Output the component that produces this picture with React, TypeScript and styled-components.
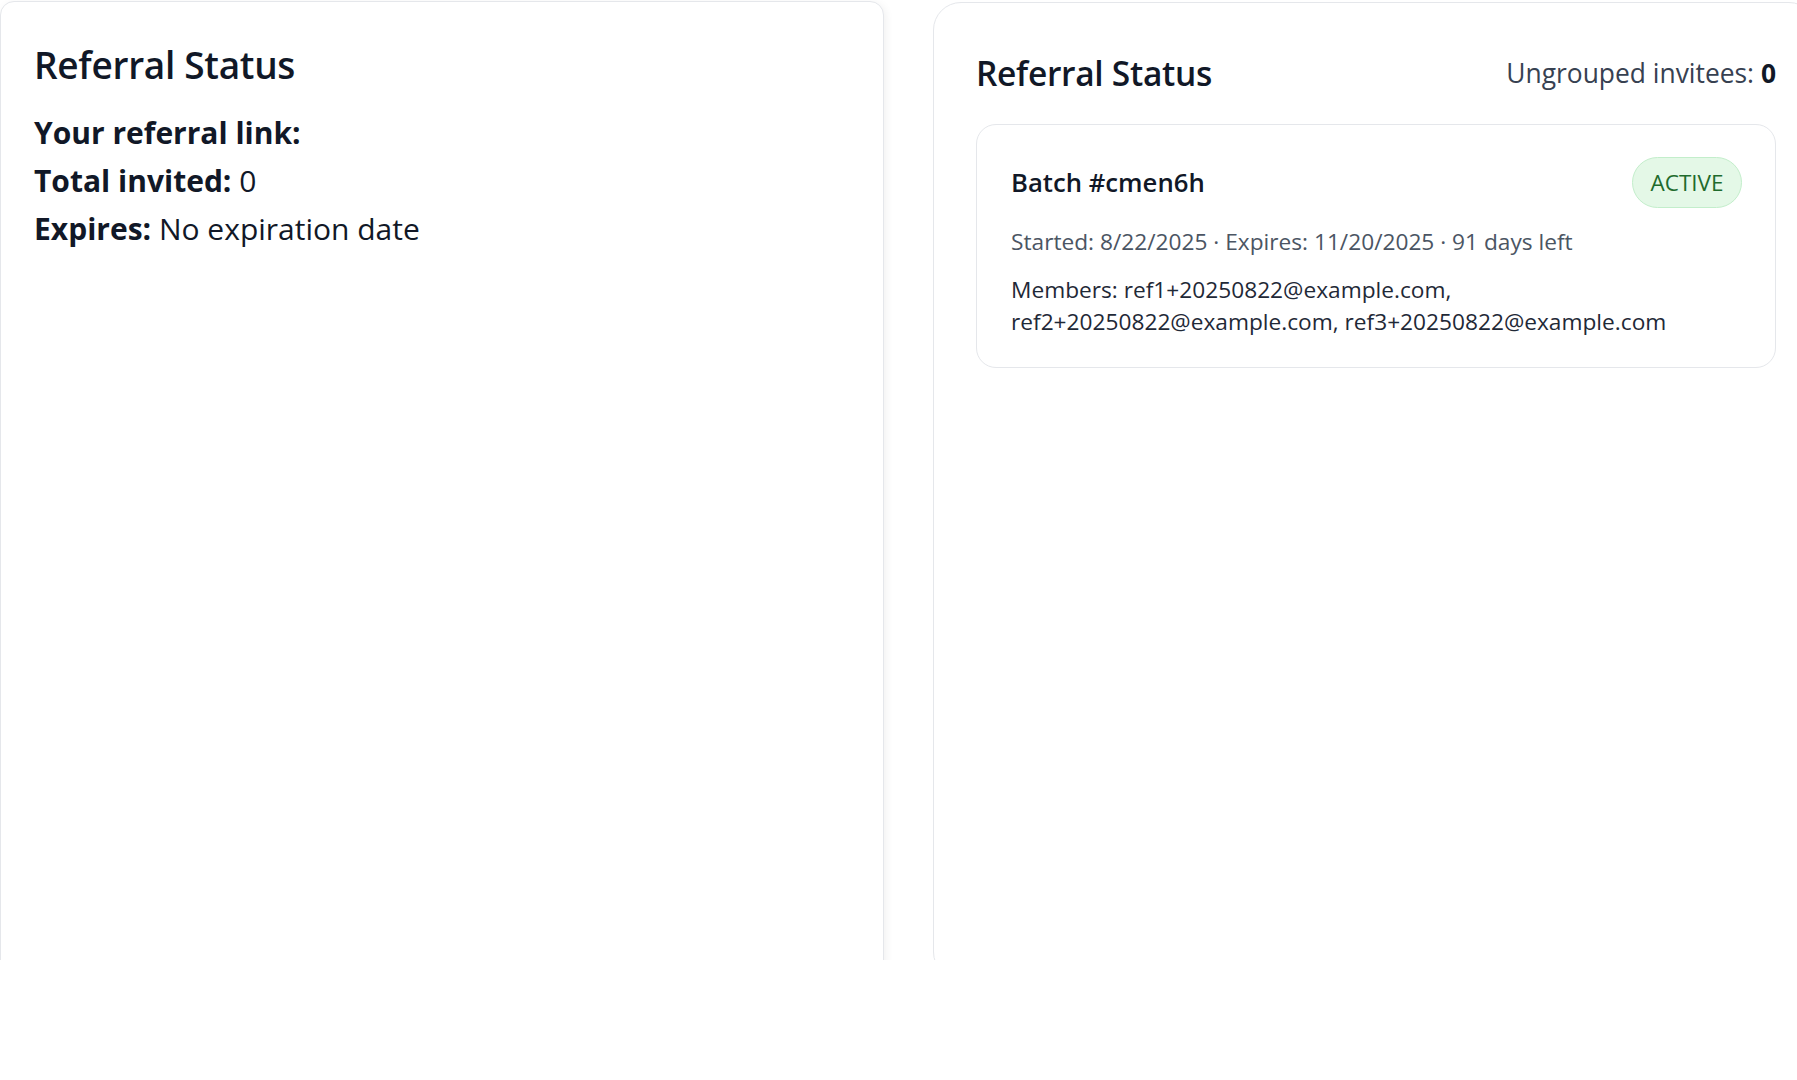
import React from "react";
import styled, { createGlobalStyle } from "styled-components";

const Global = createGlobalStyle`
  html, body {
    margin: 0;
    padding: 0;
    background: #ffffff;
    overflow: hidden;
  }
  body {
    font-family: "Open Sans", "Noto Sans", "Liberation Sans", sans-serif;
    color: #111827;
  }
  * { box-sizing: border-box; }
`;

const Viewport = styled.div`
  width: 1797px;
  height: 960px;
  overflow: hidden;
  padding-top: 1px;
`;

const Columns = styled.div`
  display: grid;
  grid-template-columns: 884px 884px;
  column-gap: 49px;
  width: 1817px;
  align-items: start;
`;

const LeftCard = styled.section`
  height: 980px;
  background: #fff;
  border: 1px solid #e5e7eb;
  border-radius: 14px;
  box-shadow: 2px 2px 8px rgba(0, 0, 0, 0.06);
  padding: 39px 33px;
`;

const RightCard = styled.section`
  height: 978px;
  margin-top: 1px;
  background: #fff;
  border: 1px solid #e5e7eb;
  border-radius: 28px;
  padding: 48px 40px 46px 42px;
`;

const BigTitle = styled.h2<{ $size: number }>`
  margin: 0;
  font-size: ${(p) => p.$size}px;
  line-height: 48px;
  font-weight: 600;
  color: #111827;
  letter-spacing: -0.3px;
`;

const InfoList = styled.div`
  margin-top: 20px;
  display: flex;
  flex-direction: column;
`;

const InfoLine = styled.div`
  font-size: 30px;
  line-height: 48px;
  color: #111827;
  font-weight: 400;
  b {
    font-weight: 700;
  }
`;

const HeaderRow = styled.div`
  display: flex;
  align-items: center;
  justify-content: space-between;
  height: 44px;
`;

const Ungrouped = styled.div`
  font-size: 26.4px;
  line-height: 34px;
  color: #374151;
  b {
    color: #111827;
    font-weight: 700;
  }
`;

const BatchCard = styled.div`
  margin-top: 29px;
  border: 1px solid #e5e7eb;
  border-radius: 20px;
  padding: 32px 33px 29px 34px;
`;

const BatchHead = styled.div`
  display: flex;
  align-items: center;
  justify-content: space-between;
`;

const BatchName = styled.div`
  font-size: 25.7px;
  line-height: 34px;
  font-weight: 600;
  color: #111827;
`;

const Pill = styled.span`
  display: inline-flex;
  align-items: center;
  height: 51px;
  padding: 0 17.5px;
  border-radius: 999px;
  background: #e4f8e7;
  border: 1.5px solid #c3eecb;
  color: #1f6b2d;
  font-size: 22.5px;
  font-weight: 400;
`;

const Meta = styled.div<{ $tone: string; $gap: number }>`
  margin-top: ${(p) => p.$gap}px;
  font-size: 22.7px;
  line-height: 32px;
  color: ${(p) => p.$tone};
`;

export default function App() {
  return (
    <>
      <Global />
      <Viewport>
        <Columns>
          <LeftCard>
            <BigTitle $size={37}>Referral Status</BigTitle>
            <InfoList>
              <InfoLine>
                <b>Your referral link:</b>
              </InfoLine>
              <InfoLine>
                <b>Total invited:</b> 0
              </InfoLine>
              <InfoLine>
                <b>Expires:</b> No expiration date
              </InfoLine>
            </InfoList>
          </LeftCard>
          <RightCard>
            <HeaderRow>
              <BigTitle $size={33.5}>Referral Status</BigTitle>
              <Ungrouped>
                Ungrouped invitees: <b>0</b>
              </Ungrouped>
            </HeaderRow>
            <BatchCard>
              <BatchHead>
                <BatchName>Batch #cmen6h</BatchName>
                <Pill>ACTIVE</Pill>
              </BatchHead>
              <Meta $tone="#4b5563" $gap={18}>
                Started: 8/22/2025 · Expires: 11/20/2025 · 91 days left
              </Meta>
              <Meta $tone="#1f2937" $gap={16}>
                Members: ref1+20250822@example.com, ref2+20250822@example.com,
                ref3+20250822@example.com
              </Meta>
            </BatchCard>
          </RightCard>
        </Columns>
      </Viewport>
    </>
  );
}
